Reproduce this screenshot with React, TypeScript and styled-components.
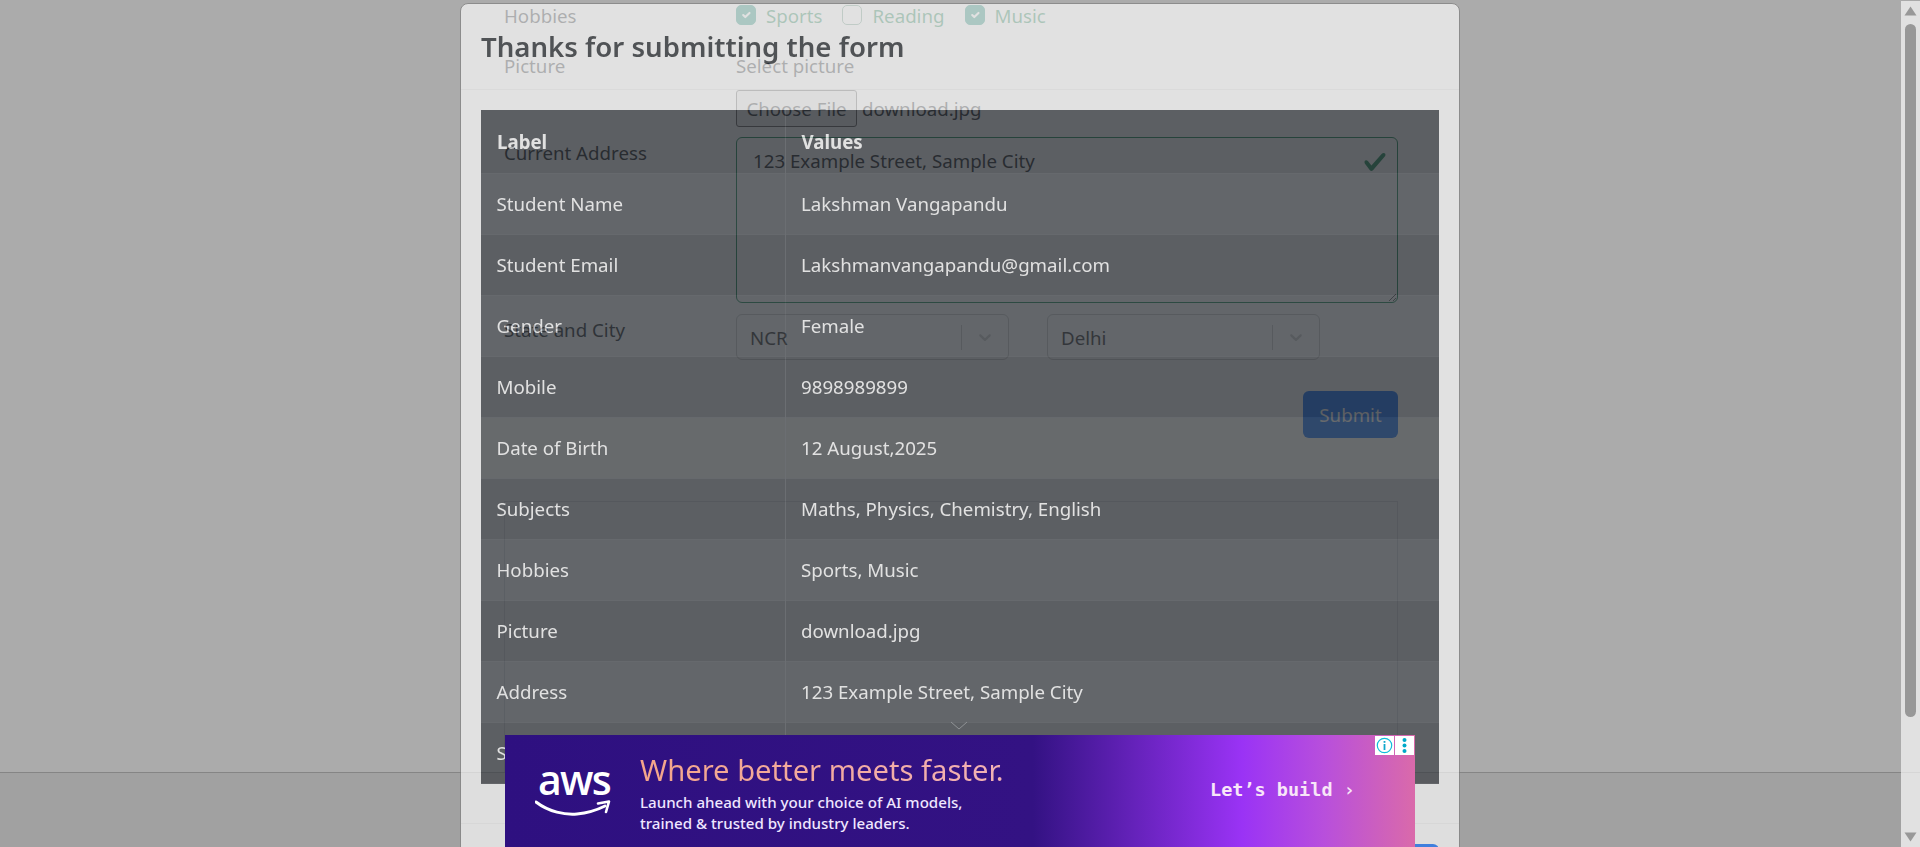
import React from 'react';
import styled, { createGlobalStyle } from 'styled-components';

const GlobalStyle = createGlobalStyle`
  html, body {
    margin: 0;
    height: 100%;
    overflow: hidden;
    background: #fff;
  }
  * {
    box-sizing: border-box;
  }
`;

const FONT = '"Noto Sans", "Open Sans", Arial, sans-serif';

const Page = styled.div`
  display: flex;
  width: 1920px;
  height: 847px;
  overflow: hidden;
  position: relative;
  font-family: ${FONT};
  font-size: 18.7px;
  line-height: 27px;
  color: #212529;
`;

const Viewport = styled.div`
  flex: 1;
  height: 847px;
  display: flex;
  flex-direction: column;
  position: relative;
  overflow: hidden;
`;

/* ---------- scrollbar ---------- */

const ScrollBar = styled.div`
  width: 19px;
  flex: none;
  background: #e1e1e1;
  border-top: 1px solid #a9a9a9;
  display: flex;
  flex-direction: column;
  align-items: center;
  padding: 5px 0;
  position: relative;
  &::after {
    content: '';
    position: absolute;
    left: 0;
    right: 0;
    top: 771px;
    height: 1px;
    background: #d6d6d6;
  }
`;

const Thumb = styled.div`
  width: 11px;
  height: 693px;
  margin: 8px 0 auto;
  background: #989898;
  border-radius: 6px;
`;

/* ---------- the form behind the modal ---------- */

const Form = styled.form`
  width: 894px;
  height: 772px;
  flex: none;
  margin-left: 504px;
  padding-top: 5px;
  display: flex;
  flex-direction: column;
`;

const FormRow = styled.div<{ $top: number; $height?: number }>`
  display: grid;
  grid-template-columns: 232px 1fr;
  margin-top: ${(p) => p.$top}px;
  ${(p) => (p.$height ? `height: ${p.$height}px;` : '')}
`;

const RowLabel = styled.div<{ $top?: number }>`
  padding-top: ${(p) => p.$top ?? 0}px;
`;

const CheckRow = styled.div`
  display: flex;
  align-items: center;
  height: 20px;
`;

const CheckBox = styled.span<{ $checked?: boolean }>`
  width: 20px;
  height: 20px;
  border-radius: 5px;
  border: 1px solid ${(p) => (p.$checked ? '#198f78' : '#6f9f8a')};
  background: ${(p) => (p.$checked ? '#198f78' : 'transparent')};
  display: flex;
  align-items: center;
  justify-content: center;
  margin-right: 10px;
`;

const CheckText = styled.span`
  color: #198754;
  margin-right: 20px;
`;

const FileRow = styled.div`
  display: flex;
  align-items: center;
  gap: 5px;
  margin-top: 11px;
`;

const FileButton = styled.div`
  width: 121px;
  height: 37px;
  border: 1px solid #5f5f5f;
  border-radius: 3px;
  background: #efefef;
  display: flex;
  align-items: center;
  justify-content: center;
`;

const AddressBox = styled.div`
  position: relative;
  height: 166px;
`;

const AddressInput = styled.textarea`
  display: block;
  width: 100%;
  height: 100%;
  border: 1px solid #198754;
  border-radius: 6px;
  padding: 9px 16px;
  background: #fff;
  font: inherit;
  color: inherit;
  outline: none;
`;

const ValidIcon = styled.svg`
  position: absolute;
  top: 13px;
  right: 11px;
  width: 24px;
  height: 24px;
`;

const SelectRow = styled.div`
  display: flex;
  gap: 38px;
`;

const Select = styled.div`
  width: 273px;
  height: 46px;
  border: 1px solid #ccc;
  border-radius: 6px;
  background: #fff;
  display: flex;
  align-items: center;
  padding-left: 13px;
`;

const SelectValue = styled.span`
  flex: 1;
  color: #333;
`;

const SelectSep = styled.span`
  width: 1px;
  height: 25px;
  background: #ccc;
`;

const SelectChevron = styled.svg`
  width: 20px;
  height: 20px;
  margin: 0 13px 0 13px;
  fill: #ccc;
`;

const SubmitRow = styled.div`
  display: flex;
  justify-content: flex-end;
  margin-top: 31px;
`;

const SubmitButton = styled.div`
  width: 95px;
  height: 47px;
  border-radius: 6px;
  background: #0d6efd;
  color: #fff;
  display: flex;
  align-items: center;
  justify-content: center;
`;

const AdSlot = styled.div`
  flex: 1;
  margin-top: 63px;
  border: 1px solid #dee2e6;
  border-bottom: none;
`;

const Footer = styled.footer`
  flex: 1;
  background: #f0f0f0;
  border-top: 1px solid #c6c6c6;
`;

const Backdrop = styled.div`
  position: absolute;
  inset: 0;
  background: rgba(0, 0, 0, 0.33);
`;

/* ---------- modal ---------- */

const Modal = styled.div`
  position: absolute;
  left: 460px;
  top: 3px;
  width: 1000px;
  height: 900px;
  background: #fff;
  border: 1px solid #7d7d7d;
  border-radius: 8px;
  opacity: 0.65;
`;

const ModalHeader = styled.div`
  height: 86px;
  padding: 21px 20px 0;
  border-bottom: 1px solid #f4f4f4;
`;

const ModalTitle = styled.h4`
  margin: 0;
  font-size: 27.6px;
  line-height: 42px;
  font-weight: 600;
  color: #212529;
`;

const ModalBody = styled.div`
  padding: 20px 20px 39px;
  border-bottom: 1px solid #f4f4f4;
`;

const ModalFooter = styled.div`
  display: flex;
  justify-content: flex-end;
  padding: 20px;
`;

const CloseButton = styled.div`
  width: 80px;
  height: 40px;
  border-radius: 6px;
  background: #0d6efd;
  color: #fff;
  text-align: center;
`;

const Table = styled.table`
  width: 958px;
  border-collapse: collapse;
  table-layout: fixed;
  color: #fff;
`;

const Row = styled.tr<{ $tone: 'dark' | 'light' | 'hover'; $height: number }>`
  height: ${(p) => p.$height}px;
  background: ${(p) =>
    p.$tone === 'dark' ? '#33373d' : p.$tone === 'light' ? '#3d4248' : '#44484b'};
  border-bottom: 1px solid #42464c;
`;

const HeadCell = styled.th<{ $first?: boolean }>`
  text-align: left;
  padding: 1px 16px 0;
  font-weight: 700;
  ${(p) => (p.$first ? 'width: 304px; border-right: 1px solid #4a4e54;' : '')}
`;

const Cell = styled.td<{ $first?: boolean }>`
  padding: 0 16px 0 15.5px;
  ${(p) => (p.$first ? 'border-right: 1px solid #4a4e54;' : '')}
`;

/* ---------- advert ---------- */

const Ad = styled.div`
  position: absolute;
  left: 505px;
  top: 735px;
  width: 910px;
  height: 112px;
  background: linear-gradient(90deg, #2e1080 0%, #331283 58%, #9a33f5 81%, #b84fdc 90%, #da6aaa 100%);
  display: flex;
  align-items: flex-start;
  color: #fff;
`;

const CollapseChevron = styled.svg`
  position: absolute;
  left: 445px;
  top: -14px;
  width: 18px;
  height: 9px;
`;

const AwsLogo = styled.div`
  width: 135px;
  flex: none;
  padding: 25px 0 0 33px;
`;

const AwsWord = styled.div`
  font-family: "Open Sans", sans-serif;
  font-size: 41px;
  line-height: 38px;
  font-weight: 600;
  letter-spacing: -1.7px;
`;

const AwsSmile = styled.svg`
  display: block;
  width: 76px;
  height: 20px;
  margin: 1px 0 0 -3px;
`;

const AdCopy = styled.div`
  padding-top: 18px;
`;

const AdHeadline = styled.div`
  font-size: 29.2px;
  line-height: 34px;
  background: linear-gradient(90deg, #f4a58a, #f2b1b5);
  background-clip: text;
  -webkit-background-clip: text;
  color: transparent;
`;

const AdSub = styled.div`
  font-size: 15.1px;
  line-height: 20.5px;
  margin-top: 5px;
  font-weight: 500;
  color: #efe6ff;
`;

const AdCta = styled.div`
  position: absolute;
  left: 705px;
  top: 41px;
  font-family: "DejaVu Sans Mono", monospace;
  font-weight: 700;
  font-size: 18.5px;
  line-height: 28px;
  color: #f8e6f8;
  white-space: pre;
`;

const AdBadges = styled.div`
  position: absolute;
  right: 1px;
  top: 1px;
  display: flex;
  gap: 1px;
`;

const AdBadge = styled.div`
  width: 19px;
  height: 19px;
  background: #fff;
  display: flex;
  align-items: center;
  justify-content: center;
`;

const rows: [string, string, 'dark' | 'light' | 'hover'][] = [
  ['Student Name', 'Lakshman Vangapandu', 'light'],
  ['Student Email', 'Lakshmanvangapandu@gmail.com', 'dark'],
  ['Gender', 'Female', 'light'],
  ['Mobile', '9898989899', 'dark'],
  ['Date of Birth', '12 August,2025', 'hover'],
  ['Subjects', 'Maths, Physics, Chemistry, English', 'dark'],
  ['Hobbies', 'Sports, Music', 'light'],
  ['Picture', 'download.jpg', 'dark'],
  ['Address', '123 Example Street, Sample City', 'light'],
  ['State and City', 'NCR Delhi', 'dark'],
];

const Tick = () => (
  <svg width="14" height="14" viewBox="0 0 20 20" fill="none">
    <path d="M6 10l3 3 6-6" stroke="#fff" strokeWidth="3" strokeLinecap="round" strokeLinejoin="round" />
  </svg>
);

const Chevron = () => (
  <SelectChevron viewBox="0 0 20 20">
    <path d="M4.516 7.548c0.436-0.446 1.043-0.481 1.576 0l3.908 3.747 3.908-3.747c0.533-0.481 1.141-0.446 1.574 0 0.436 0.445 0.408 1.197 0 1.615-0.406 0.418-4.695 4.502-4.695 4.502-0.217 0.223-0.502 0.335-0.787 0.335s-0.57-0.112-0.789-0.335c0 0-4.287-4.084-4.695-4.502s-0.436-1.17 0-1.615z" />
  </SelectChevron>
);

const App: React.FC = () => {
  return (
    <Page>
      <GlobalStyle />
      <Viewport>
        <Form>
          <FormRow $top={0}>
            <RowLabel>
              <CheckRow>Hobbies</CheckRow>
            </RowLabel>
            <CheckRow>
              <CheckBox $checked>
                <Tick />
              </CheckBox>
              <CheckText>Sports</CheckText>
              <CheckBox />
              <CheckText>Reading</CheckText>
              <CheckBox $checked>
                <Tick />
              </CheckBox>
              <CheckText>Music</CheckText>
            </CheckRow>
          </FormRow>
          <FormRow $top={27}>
            <RowLabel>Picture</RowLabel>
            <div>
              <div>Select picture</div>
              <FileRow>
                <FileButton>Choose File</FileButton>
                download.jpg
              </FileRow>
            </div>
          </FormRow>
          <FormRow $top={10} $height={166}>
            <RowLabel $top={2}>Current Address</RowLabel>
            <AddressBox>
              <AddressInput readOnly defaultValue="123 Example Street, Sample City" />
              <ValidIcon viewBox="0 0 8 8">
                <path
                  fill="#198754"
                  d="M2.3 6.73.6 4.53c-.4-1.04.46-1.4 1.1-.8l1.1 1.4 3.4-3.8c.6-.63 1.6-.27 1.2.7l-4 4.6c-.43.5-.8.4-1.1.1z"
                />
              </ValidIcon>
            </AddressBox>
          </FormRow>
          <FormRow $top={11} $height={46}>
            <RowLabel $top={2}>State and City</RowLabel>
            <SelectRow>
              <Select>
                <SelectValue>NCR</SelectValue>
                <SelectSep />
                <Chevron />
              </Select>
              <Select>
                <SelectValue>Delhi</SelectValue>
                <SelectSep />
                <Chevron />
              </Select>
            </SelectRow>
          </FormRow>
          <SubmitRow>
            <SubmitButton>Submit</SubmitButton>
          </SubmitRow>
          <AdSlot />
        </Form>
        <Footer />
        <Backdrop />
        <Modal>
          <ModalHeader>
            <ModalTitle>Thanks for submitting the form</ModalTitle>
          </ModalHeader>
          <ModalBody>
            <Table>
              <thead>
                <Row $tone="dark" $height={63}>
                  <HeadCell $first>Label</HeadCell>
                  <HeadCell>Values</HeadCell>
                </Row>
              </thead>
              <tbody>
                {rows.map(([label, value, tone]) => (
                  <Row key={label} $tone={tone} $height={61}>
                    <Cell $first>{label}</Cell>
                    <Cell>{value}</Cell>
                  </Row>
                ))}
              </tbody>
            </Table>
          </ModalBody>
          <ModalFooter>
            <CloseButton>Close</CloseButton>
          </ModalFooter>
        </Modal>
        <Ad>
          <CollapseChevron viewBox="0 0 18 9" fill="none">
            <path d="M1 1l8 7 8-7" stroke="#8f9295" strokeWidth="1" />
          </CollapseChevron>
          <AwsLogo>
            <AwsWord>aws</AwsWord>
            <AwsSmile viewBox="0 0 76 20" fill="none">
              <path d="M1 3C14 13 30 16 42 15 53 14 62 11 70 7" stroke="#fff" strokeWidth="3" strokeLinecap="round" />
              <path d="M63 4.5 74 2.5 71 13" stroke="#fff" strokeWidth="2.6" strokeLinecap="round" strokeLinejoin="round" />
            </AwsSmile>
          </AwsLogo>
          <AdCopy>
            <AdHeadline>Where better meets faster.</AdHeadline>
            <AdSub>
              Launch ahead with your choice of AI models,
              <br />
              trained &amp; trusted by industry leaders.
            </AdSub>
          </AdCopy>
          <AdCta>Let’s build ›</AdCta>
          <AdBadges>
            <AdBadge>
              <svg width="17" height="17" viewBox="0 0 17 17" fill="none">
                <circle cx="8.5" cy="8.5" r="7.2" stroke="#10bcdc" strokeWidth="1.2" />
                <rect x="7.6" y="7" width="1.8" height="6" fill="#10a8cc" />
                <rect x="7.6" y="4" width="1.8" height="1.8" fill="#10a8cc" />
              </svg>
            </AdBadge>
            <AdBadge>
              <svg width="5" height="15" viewBox="0 0 5 15" fill="#00a9c9">
                <circle cx="2.5" cy="2" r="2" />
                <circle cx="2.5" cy="7.5" r="2" />
                <circle cx="2.5" cy="13" r="2" />
              </svg>
            </AdBadge>
          </AdBadges>
        </Ad>
      </Viewport>
      <ScrollBar>
        <svg width="13" height="10" viewBox="0 0 13 10" fill="#989898">
          <path d="M6.5 0.5 12.5 9.5H0.5Z" />
        </svg>
        <Thumb />
        <svg width="13" height="10" viewBox="0 0 13 10" fill="#989898">
          <path d="M6.5 9.5 12.5 0.5H0.5Z" />
        </svg>
      </ScrollBar>
    </Page>
  );
};

export default App;
